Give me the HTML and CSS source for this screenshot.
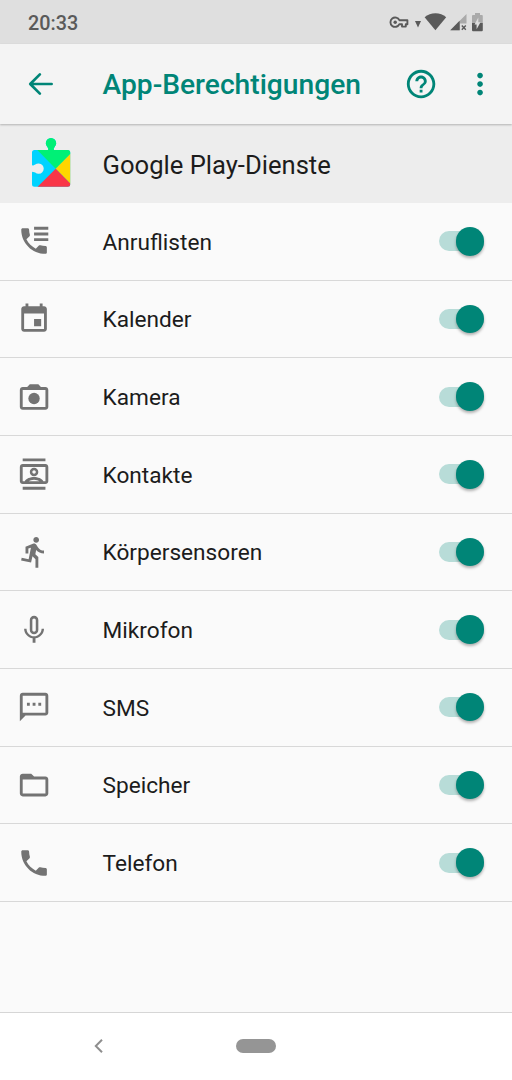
FILE: index.html
```html
<!DOCTYPE html>
<html lang="de">
<head>
    <meta charset="UTF-8">
    <meta name="viewport" content="width=device-width, initial-scale=1.0">
    <title>App-Berechtigungen</title>
    <link rel="stylesheet" href="styles.css">
</head>
<body>
    <div class="status-bar">
      <span class="clock">20:33</span>
      <svg class="status-icons" width="96" height="24" viewBox="388 10 96 24">
        <!-- vpn key -->
        <path d="M399.4 20.2A4.700 4.700 0 1 0 399.400 24.200H402V26.600H405.800V24.200H407.400V20.200Z" fill="none" stroke="#5a5a5a" stroke-width="1.9" stroke-linejoin="round"/>
        <circle cx="395.2" cy="22.2" r="1.7" fill="#5a5a5a"/>
        <path d="M415 21h6l-3 6.4z" fill="#5a5a5a"/>
        <!-- wifi -->
        <path d="M424.6 17.2C430.5 11.8 440.5 11.8 446.2 17.2L435.4 30.2Z" fill="#5a5a5a"/>
        <!-- signal -->
        <path d="M466.5 14V23.5H460V30.2H450.3Z" fill="#aaa"/>
        <path d="M459.6 20.8V30.2H450.3Z" fill="#5a5a5a"/>
        <path d="M461.8 25.6l4 4.2M465.8 25.6l-4 4.2" stroke="#5a5a5a" stroke-width="1.4"/>
        <!-- battery -->
        <path d="M472 23V16q0-1 1-1h2v-2h5v2h1.800q1 0 1 1v7z" fill="#aaa"/>
        <path d="M472 23h10.800v7q0 1.200-1 1.200h-8.800q-1 0-1-1.200z" fill="#5a5a5a"/>
        <path d="M478.300 17.500v4.800h2.200l-3.900 7v-4.900h-2.100z" fill="#dfdfdf"/>
      </svg>
    </div>

    <header class="toolbar">
      <svg class="back" width="34" height="34" viewBox="0 0 24 24"><path d="M19.500 12H4.800M11.200 5.200L4.400 12l6.800 6.800" fill="none" stroke="#008577" stroke-width="1.900" stroke-linecap="round" stroke-linejoin="round"/></svg>
      <h1>App-Berechtigungen</h1>
      <svg class="help" width="34.130" height="34.130" viewBox="0 0 24 24"><path d="M11 18h2v-2h-2v2zm1-16C6.480 2 2 6.480 2 12s4.480 10 10 10 10-4.480 10-10S17.520 2 12 2zm0 18c-4.410 0-8-3.590-8-8s3.590-8 8-8 8 3.590 8 8-3.590 8-8 8zm0-14c-2.210 0-4 1.790-4 4h2c0-1.100.9-2 2-2s2 .9 2 2c0 2-3 1.750-3 5h2c0-2.250 3-2.500 3-5 0-2.210-1.790-4-4-4z"/></svg>
      <svg class="more" width="34.130" height="34.130" viewBox="0 0 24 24"><path d="M12 8c1.100 0 2-.9 2-2s-.9-2-2-2-2 .9-2 2 .9 2 2 2zm0 2c-1.100 0-2 .9-2 2s.9 2 2 2 2-.9 2-2-.9-2-2-2zm0 6c-1.100 0-2 .9-2 2s.9 2 2 2 2-.9 2-2-.9-2-2-2z"/></svg>
    </header>

    <section class="app">
      <svg class="app-icon" width="40" height="50" viewBox="31 137 40 50">
        <defs>
          <clipPath id="puzzle">
            <path d="M34.500 149H47.200Q48.600 149 48.200 147.600L47.400 146A5.200 5.200 0 1 1 54.600 146L53.800 147.600Q53.400 149 54.800 149H67.700Q70.200 149 70.200 151.500V183.300Q70.200 185.800 67.700 185.800H34.500Q32 185.800 32 183.300V171.700Q32 170.400 33.300 170.900L35.200 171.600A5.200 5.200 0 1 0 35.200 163.600L33.300 164.400Q32 164.900 32 163.600V151.500Q32 149 34.500 149Z"/>
          </clipPath>
        </defs>
        <g clip-path="url(#puzzle)">
          <path d="M31 137h40v50H31z" fill="#00d3ff"/>
          <path d="M37.300 149V137H71V152.300L55.700 167.700Z" fill="#00f076"/>
          <path d="M71 152.300V183.300L55.700 167.700Z" fill="#ffd500"/>
          <path d="M37.300 186.100V187H71V183.300L55.700 167.700Z" fill="#f93648"/>
        </g>
      </svg>
      <h2>Google Play-Dienste</h2>
    </section>

    <ul class="permissions">
      <li>
        <svg class="icon" viewBox="0 0 24 24"><path d="M20 15.500c-1.250 0-2.450-.2-3.570-.57-.35-.11-.74-.03-1.020.24l-2.200 2.200c-2.830-1.440-5.150-3.750-6.590-6.590l2.200-2.210c.28-.26.36-.65.25-1C8.700 6.450 8.500 5.250 8.500 4c0-.55-.45-1-1-1H4c-.55 0-1 .45-1 1 0 9.390 7.610 17 17 17 .55 0 1-.45 1-1v-3.500c0-.55-.45-1-1-1zM12 2h10v2H12zM12 6h10v2H12zM12 10h10v2H12z"/></svg>
        <span>Anruflisten</span>
        <div class="switch"></div>
      </li>
      <li>
        <svg class="icon" viewBox="0 0 24 24"><path d="M17 12h-5v5h5v-5zM16 1v2H8V1H6v2H5c-1.110 0-1.990.9-1.990 2L3 19c0 1.100.89 2 2 2h14c1.100 0 2-.9 2-2V5c0-1.100-.9-2-2-2h-1V1h-2zm3 18H5V8h14v11z"/></svg>
        <span>Kalender</span>
        <div class="switch"></div>
      </li>
      <li>
        <svg class="icon" viewBox="0 0 24 24"><path d="M20 5h-3.170L15 3H9L7.170 5H4c-1.100 0-2 .9-2 2v12c0 1.100.9 2 2 2h16c1.100 0 2-.9 2-2V7c0-1.100-.9-2-2-2zm0 14H4V7h16v12z"/><circle cx="12" cy="13" r="4"/></svg>
        <span>Kamera</span>
        <div class="switch"></div>
      </li>
      <li>
        <svg class="icon" viewBox="0 0 24 24"><path d="M4 1h16v2H4zM4 21h16v2H4zM20 5H4c-1.100 0-2 .9-2 2v10c0 1.100.9 2 2 2h16c1.100 0 2-.9 2-2V7c0-1.100-.9-2-2-2zM8.210 17c.7-.47 2.460-1 3.790-1s3.090.53 3.790 1H8.210zM20 17h-1.500c-.6-1.900-4.100-3-6.500-3s-5.900 1.100-6.500 3H4V7h16v10zM12 13.500c1.650 0 3-1.350 3-3s-1.350-3-3-3-3 1.350-3 3 1.350 3 3 3zm0-4.200c.66 0 1.200.54 1.200 1.200s-.54 1.200-1.200 1.200-1.200-.54-1.200-1.200.54-1.200 1.200-1.200z"/></svg>
        <span>Kontakte</span>
        <div class="switch"></div>
      </li>
      <li>
        <svg class="icon" viewBox="0 0 24 24"><path d="M13.490 5.480c1.100 0 2-.9 2-2s-.9-2-2-2-2 .9-2 2 .9 2 2 2zm-3.600 13.900l1-4.400 2.100 2v6h2v-7.500l-2.100-2 .6-3c1.300 1.500 3.300 2.500 5.500 2.500v-2c-1.900 0-3.500-1-4.300-2.400l-1-1.600c-.4-.6-1-1-1.700-1-.3 0-.5.1-.8.1l-5.200 2.200v4.700h2v-3.400l1.800-.7-1.600 8.100-4.900-1-.4 2 7 1.400z"/></svg>
        <span>Körpersensoren</span>
        <div class="switch"></div>
      </li>
      <li>
        <svg class="icon" viewBox="0 0 24 24"><path d="M12 15c1.660 0 3-1.340 3-3V5c0-1.660-1.340-3-3-3S9 3.340 9 5v7c0 1.660 1.340 3 3 3zm-1.200-10c0-.66.54-1.200 1.200-1.200s1.200.54 1.200 1.200v7c0 .66-.54 1.200-1.200 1.200s-1.200-.54-1.200-1.200V5zM17.300 11c0 3-2.540 5.300-5.300 5.300S6.700 14 6.700 11H5c0 3.410 2.720 6.230 6 6.720V21h2v-3.280c3.280-.48 6-3.300 6-6.720h-1.700z"/></svg>
        <span>Mikrofon</span>
        <div class="switch"></div>
      </li>
      <li>
        <svg class="icon" viewBox="0 0 24 24"><path d="M20 2H4c-1.100 0-2 .9-2 2v18l4-4h14c1.100 0 2-.9 2-2V4c0-1.100-.9-2-2-2zm0 14H4V4h16v12zM7 9h2v2H7zM11 9h2v2h-2zM15 9h2v2h-2z"/></svg>
        <span>SMS</span>
        <div class="switch"></div>
      </li>
      <li>
        <svg class="icon" viewBox="0 0 24 24"><path d="M20 6h-8l-2-2H4c-1.100 0-1.990.9-1.990 2L2 18c0 1.100.9 2 2 2h16c1.100 0 2-.9 2-2V8c0-1.100-.9-2-2-2zm0 12H4V8h16v10z"/></svg>
        <span>Speicher</span>
        <div class="switch"></div>
      </li>
      <li>
        <svg class="icon" viewBox="0 0 24 24"><path d="M20 15.500c-1.250 0-2.450-.2-3.570-.57-.35-.11-.74-.03-1.020.24l-2.200 2.200c-2.830-1.440-5.150-3.750-6.590-6.590l2.200-2.210c.28-.26.36-.65.25-1C8.700 6.450 8.500 5.250 8.500 4c0-.55-.45-1-1-1H4c-.55 0-1 .45-1 1 0 9.390 7.610 17 17 17 .55 0 1-.45 1-1v-3.500c0-.55-.45-1-1-1z"/></svg>
        <span>Telefon</span>
        <div class="switch"></div>
      </li>
    </ul>

    <nav class="nav-bar">
      <svg class="nav-back" width="12" height="18" viewBox="0 0 12 18"><path d="M9 2.800L2.800 9 9 15.200" fill="none" stroke="#8e8e8e" stroke-width="2"/></svg>
      <div class="nav-home"></div>
    </nav>
</body>
</html>
```
FILE: styles.css
```css
* {
  box-sizing: border-box;
}

body {
  margin: 0;
  width: 512px;
  height: 1080px;
  display: flex;
  flex-direction: column;
  background: #fafafa;
  color: #1c1c1c;
  font-family: Roboto, sans-serif;
  overflow: hidden;
}

svg {
  display: block;
  flex: none;
}

.status-bar {
  height: 44px;
  flex: none;
  display: flex;
  align-items: center;
  justify-content: space-between;
  padding: 0 28px;
  background: #dfdfdf;
}

.clock {
  color: #5a5a5a;
  font-size: 19.8px;
  font-weight: 500;
  padding-top: 2px;
}

.toolbar {
  height: 80px;
  flex: none;
  display: flex;
  align-items: center;
  padding-left: 23.5px;
  background: #f4f4f4;
  box-shadow: 0 1px 2px rgba(0, 0, 0, 0.25);
  z-index: 1;
}

.toolbar h1 {
  margin: 0 0 0 45px;
  flex: 1;
  color: #008577;
  font-size: 28.2px;
  font-weight: 500;
}

.help,
.more {
  fill: #008577;
}

.more {
  margin: 0 14.5px 0 25.5px;
}

.app {
  height: 79px;
  flex: none;
  display: flex;
  align-items: center;
  padding-left: 31px;
  background: #ededed;
}

.app-icon {
  margin-bottom: 2px;
}

.app h2 {
  margin: 0 0 0 31.5px;
  padding-top: 2px;
  font-size: 25.6px;
  font-weight: 400;
}

.permissions {
  margin: 0;
  padding: 0;
  list-style: none;
  flex: 1;
}

.permissions li {
  height: 77.67px;
  display: flex;
  align-items: center;
  padding: 0 28px 0 17px;
  border-bottom: 1px solid #d8d8d8;
  font-size: 22.65px;
}

.permissions span {
  flex: 1;
  margin-left: 51.4px;
  padding-top: 2px;
}

.icon {
  width: 34.13px;
  height: 34.13px;
  fill: #737373;
}

.switch {
  width: 45px;
  height: 20px;
  display: flex;
  align-items: center;
  justify-content: flex-end;
  background: #b8dcd8;
  border-radius: 10px;
}

/* thumb */
.switch::after {
  content: "";
  width: 28.4px;
  height: 28.4px;
  flex: none;
  border-radius: 50%;
  background: #008577;
  box-shadow: 0 2px 3px rgba(0, 0, 0, 0.3);
}

.nav-bar {
  height: 68px;
  flex: none;
  display: flex;
  align-items: center;
  padding: 0 0 2px 93px;
  border-top: 1px solid #d6d6d6;
  background: #fff;
}

.nav-home {
  width: 40px;
  height: 14px;
  margin-left: 131px;
  border-radius: 7px;
  background: #959595;
}
```
